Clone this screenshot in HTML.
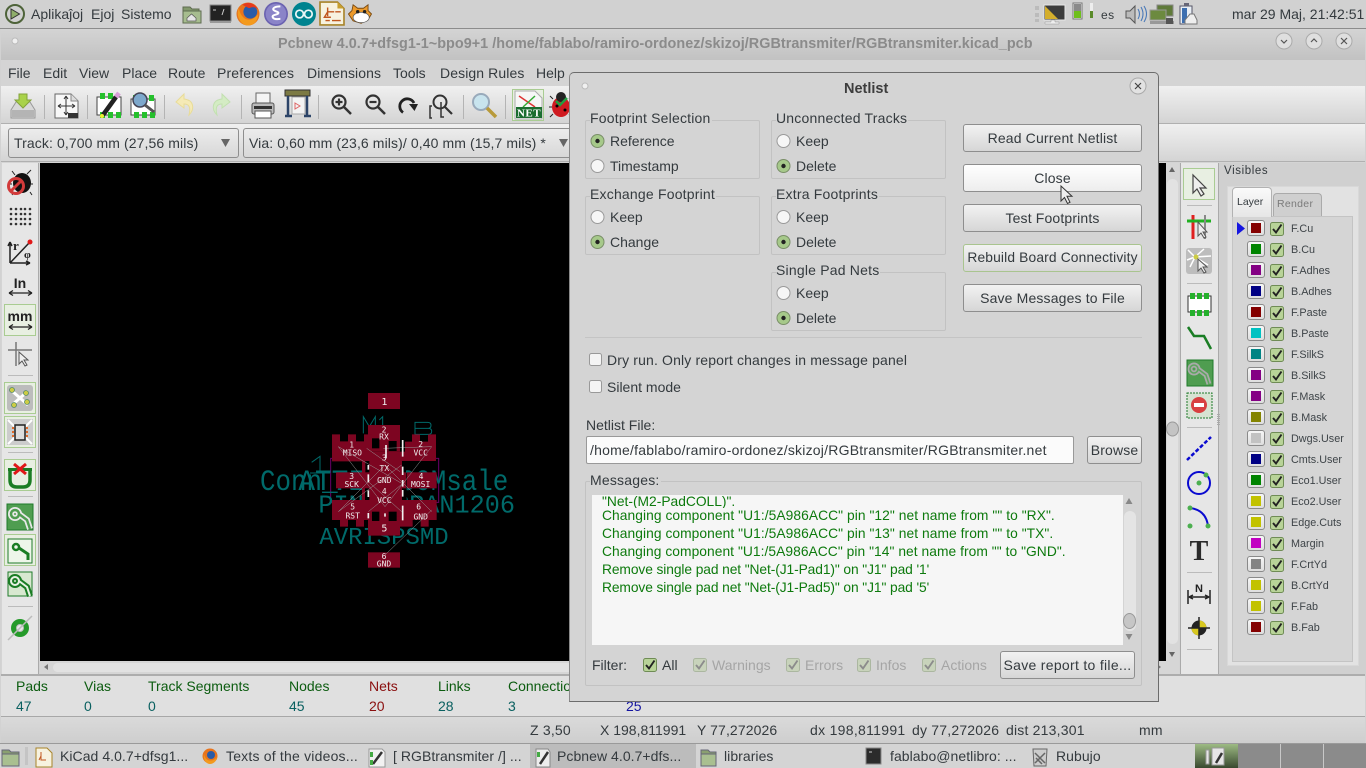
<!DOCTYPE html>
<html><head><meta charset="utf-8"><title>Pcbnew</title>
<style>
html,body{margin:0;padding:0;width:1366px;height:768px;overflow:hidden;background:#d2d2d2}
body{position:relative;font-family:"Liberation Sans",sans-serif;font-size:14px;color:#343a3e}
div,span.a{position:absolute}
.t{position:absolute;white-space:nowrap;line-height:18px;height:18px}
.btn{position:absolute;box-sizing:border-box;border:1px solid #8e8e8e;border-radius:3px;background:linear-gradient(#f2f2f2,#d6d6d6);text-align:center;line-height:26px;white-space:nowrap;letter-spacing:.15px}
.grp{position:absolute;box-sizing:border-box;border:1px solid #c2c2c2;border-radius:2px}
.lab{position:absolute;white-space:nowrap;line-height:18px;background:#d4d4d4;padding-right:1px;letter-spacing:.2px}
.box{position:absolute;box-sizing:border-box;border:1px solid #a9cc92;background:#e8efe2}
.sep{position:absolute;background:#bdbdbd}
.sw{position:absolute;left:1247px;width:18px;height:16px;margin-top:1px;box-sizing:border-box;border:1px solid #8a8a8a;border-radius:3px;background:linear-gradient(#f6f6f6,#dedede)}
.sw i{position:absolute;left:3px;top:2px;width:10px;height:10px;display:block}
.ll{position:absolute;left:1291px;font-size:10.8px;line-height:16px;margin-top:1px;white-space:nowrap;color:#3e4448}
.m{position:absolute;left:602px;font-size:13.8px;line-height:16px;color:#0d7a0d;white-space:nowrap}
.tb{font-size:14px;top:747px;letter-spacing:.05px}
.st{top:721px;letter-spacing:.2px}
.gr{color:#a5a5a5}
</style></head><body>

<!-- top panel -->
<div style="left:0;top:0;width:1366px;height:28px;background:#d1d1d1"></div>
<div class="t" style="left:31px;top:5px">Aplikaĵoj</div>
<div class="t" style="left:91px;top:5px">Ejoj</div>
<div class="t" style="left:121px;top:5px">Sistemo</div>
<div class="t" style="left:1101px;top:6px;font-size:12px;letter-spacing:.5px">es</div>
<div class="t" style="left:1232px;top:5px">mar 29 Maj, 21:42:51</div>

<!-- window frame -->
<div style="left:0;top:28px;width:1366px;height:1px;background:#8c8c8c"></div>
<div style="left:1px;top:29px;width:1364px;height:31px;background:linear-gradient(#d4d4d4,#c2c2c2)"></div>
<div class="t" style="left:278px;top:35px;font-weight:bold;font-size:14.4px;color:#8b8b8b;letter-spacing:.04px">Pcbnew 4.0.7+dfsg1-1~bpo9+1 /home/fablabo/ramiro-ordonez/skizoj/RGBtransmiter/RGBtransmiter.kicad_pcb</div>
<div style="left:1px;top:60px;width:1364px;height:26px;background:#d4d4d4"></div>
<div class="t" style="left:8px;top:64px">File</div>
<div class="t" style="left:43px;top:64px">Edit</div>
<div class="t" style="left:79px;top:64px">View</div>
<div class="t" style="left:122px;top:64px">Place</div>
<div class="t" style="left:168px;top:64px">Route</div>
<div class="t" style="left:217px;top:64px;letter-spacing:.15px">Preferences</div>
<div class="t" style="left:307px;top:64px;letter-spacing:.1px">Dimensions</div>
<div class="t" style="left:393px;top:64px">Tools</div>
<div class="t" style="left:440px;top:64px;letter-spacing:.1px">Design Rules</div>
<div class="t" style="left:536px;top:64px">Help</div>

<!-- toolbars -->
<div style="left:1px;top:86px;width:1364px;height:37px;background:linear-gradient(#f0f0f0,#d4d4d4);border-bottom:1px solid #b0b0b0"></div>
<div style="left:1px;top:124px;width:1364px;height:37px;background:linear-gradient(#f0f0f0,#d4d4d4);border-bottom:1px solid #b0b0b0"></div>
<div class="btn" style="left:8px;top:128px;width:231px;height:30px;text-align:left;padding-left:5px;line-height:28px;letter-spacing:.1px;background:linear-gradient(#ececec,#d8d8d8)">Track: 0,700 mm (27,56 mils)</div>
<div class="btn" style="left:243px;top:128px;width:340px;height:30px;text-align:left;padding-left:5px;line-height:28px;letter-spacing:.1px;background:linear-gradient(#ececec,#d8d8d8)">Via: 0,60 mm (23,6 mils)/ 0,40 mm (15,7 mils) *</div>

<!-- main area -->
<div style="left:1px;top:162px;width:1364px;height:513px;background:#d4d4d4"></div>
<div style="left:2px;top:163px;width:36px;height:511px;background:#e6e6e6;border-right:1px solid #aaa"></div>
<div style="left:40px;top:163px;width:1126px;height:498px;background:#000"></div>
<div style="left:1166px;top:163px;width:13px;height:498px;background:#d6d6d6"></div>
<div style="left:40px;top:661px;width:1139px;height:13px;background:#d6d6d6"></div>
<div style="left:53px;top:663px;width:1100px;height:9px;background:#e2e2e2;border-radius:5px"></div>
<div style="left:1180px;top:163px;width:37px;height:511px;background:#e6e6e6;border-left:1px solid #aaa;border-right:1px solid #aaa"></div>

<!-- visibles panel -->
<div style="left:1219px;top:163px;width:147px;height:511px;background:#d0d0d0"></div>
<div class="t" style="left:1224px;top:162px;font-size:11.5px;letter-spacing:.6px">Visibles</div>
<div style="left:1227px;top:186px;width:132px;height:480px;background:#e2e2e2;box-sizing:border-box;border:1px solid #d8d8d8"></div>
<div style="left:1273px;top:193px;width:49px;height:23px;box-sizing:border-box;background:#cfcfcf;border:1px solid #aaa;border-bottom:none;border-radius:4px 4px 0 0"></div>
<div class="t" style="left:1277px;top:195px;font-size:10.5px;color:#7a7a7a;letter-spacing:.3px">Render</div>
<div style="left:1232px;top:216px;width:121px;height:446px;background:#d5d5d5;box-sizing:border-box;border:1px solid #c4c4c4"></div>
<div style="left:1232px;top:187px;width:40px;height:30px;box-sizing:border-box;background:linear-gradient(#fafafa,#e6e6e6);border:1px solid #b2b2b2;border-bottom:none;border-radius:4px 4px 0 0"></div>
<div class="t" style="left:1237px;top:193px;font-size:10.5px">Layer</div>

<div class="sw" style="top:219px"><i style="background:#840000"></i></div><div class="ll" style="top:220px">F.Cu</div>
<div class="sw" style="top:240px"><i style="background:#008400"></i></div><div class="ll" style="top:241px">B.Cu</div>
<div class="sw" style="top:261px"><i style="background:#840084"></i></div><div class="ll" style="top:262px">F.Adhes</div>
<div class="sw" style="top:282px"><i style="background:#000084"></i></div><div class="ll" style="top:283px">B.Adhes</div>
<div class="sw" style="top:303px"><i style="background:#840000"></i></div><div class="ll" style="top:304px">F.Paste</div>
<div class="sw" style="top:324px"><i style="background:#00c2c2"></i></div><div class="ll" style="top:325px">B.Paste</div>
<div class="sw" style="top:345px"><i style="background:#008484"></i></div><div class="ll" style="top:346px">F.SilkS</div>
<div class="sw" style="top:366px"><i style="background:#840084"></i></div><div class="ll" style="top:367px">B.SilkS</div>
<div class="sw" style="top:387px"><i style="background:#840084"></i></div><div class="ll" style="top:388px">F.Mask</div>
<div class="sw" style="top:408px"><i style="background:#848400"></i></div><div class="ll" style="top:409px">B.Mask</div>
<div class="sw" style="top:429px"><i style="background:#c2c2c2"></i></div><div class="ll" style="top:430px">Dwgs.User</div>
<div class="sw" style="top:450px"><i style="background:#000084"></i></div><div class="ll" style="top:451px">Cmts.User</div>
<div class="sw" style="top:471px"><i style="background:#008400"></i></div><div class="ll" style="top:472px">Eco1.User</div>
<div class="sw" style="top:492px"><i style="background:#c2c200"></i></div><div class="ll" style="top:493px">Eco2.User</div>
<div class="sw" style="top:513px"><i style="background:#c2c200"></i></div><div class="ll" style="top:514px">Edge.Cuts</div>
<div class="sw" style="top:534px"><i style="background:#c200c2"></i></div><div class="ll" style="top:535px">Margin</div>
<div class="sw" style="top:555px"><i style="background:#848484"></i></div><div class="ll" style="top:556px">F.CrtYd</div>
<div class="sw" style="top:576px"><i style="background:#c2c200"></i></div><div class="ll" style="top:577px">B.CrtYd</div>
<div class="sw" style="top:597px"><i style="background:#c2c200"></i></div><div class="ll" style="top:598px">F.Fab</div>
<div class="sw" style="top:618px"><i style="background:#840000"></i></div><div class="ll" style="top:619px">B.Fab</div>

<!-- message panel -->
<div style="left:1px;top:674px;width:1364px;height:43px;box-sizing:border-box;background:#e0e0e0;border-top:2px solid #adadad;border-bottom:1px solid #a8a8a8"></div>
<div class="t" style="left:16px;top:677px;color:#0c5c10">Pads</div><div class="t" style="left:16px;top:697px;color:#0a6060">47</div>
<div class="t" style="left:84px;top:677px;color:#0c5c10">Vias</div><div class="t" style="left:84px;top:697px;color:#0a6060">0</div>
<div class="t" style="left:148px;top:677px;color:#0c5c10">Track Segments</div><div class="t" style="left:148px;top:697px;color:#0a6060">0</div>
<div class="t" style="left:289px;top:677px;color:#0c5c10">Nodes</div><div class="t" style="left:289px;top:697px;color:#0a6060">45</div>
<div class="t" style="left:369px;top:677px;color:#8a0f0f">Nets</div><div class="t" style="left:369px;top:697px;color:#8a0f0f">20</div>
<div class="t" style="left:438px;top:677px;color:#0c5c10">Links</div><div class="t" style="left:438px;top:697px;color:#0a6060">28</div>
<div class="t" style="left:508px;top:677px;color:#0c5c10">Connections</div><div class="t" style="left:508px;top:697px;color:#0a6060">3</div>
<div class="t" style="left:626px;top:697px;color:#1414a0">25</div>

<!-- status bar -->
<div style="left:1px;top:717px;width:1364px;height:26px;background:linear-gradient(#dadada,#cecece)"></div>
<div style="left:0;top:743px;width:1366px;height:1px;background:#9a9a9a"></div>
<div class="t st" style="left:530px">Z 3,50</div>
<div class="t st" style="left:600px;letter-spacing:0">X 198,811991</div>
<div class="t st" style="left:697px;letter-spacing:.1px">Y 77,272026</div>
<div class="t st" style="left:810px;letter-spacing:.3px">dx 198,811991</div>
<div class="t st" style="left:912px">dy 77,272026</div>
<div class="t st" style="left:1006px">dist 213,301</div>
<div class="t st" style="left:1139px">mm</div>

<!-- taskbar -->
<div style="left:0;top:744px;width:1366px;height:24px;background:#d4d4d4"></div>
<div style="left:530px;top:744px;width:166px;height:24px;background:#bcbcbc"></div>
<div style="left:1195px;top:744px;width:43px;height:24px;background:linear-gradient(#9dbb83,#39492f)"></div>
<div style="left:1238px;top:744px;width:128px;height:24px;background:#8b8b8b"></div>
<div style="left:1280px;top:744px;width:1px;height:24px;background:#c8c8c8"></div>
<div style="left:1323px;top:744px;width:1px;height:24px;background:#c8c8c8"></div>
<div class="t tb" style="left:60px">KiCad 4.0.7+dfsg1...</div>
<div class="t tb" style="left:226px;letter-spacing:.2px">Texts of the videos...</div>
<div class="t tb" style="left:393px">[ RGBtransmiter /] ...</div>
<div class="t tb" style="left:557px">Pcbnew 4.0.7+dfs...</div>
<div class="t tb" style="left:724px">libraries</div>
<div class="t tb" style="left:890px">fablabo@netlibro: ...</div>
<div class="t tb" style="left:1056px">Rubujo</div>

<!-- toolbar highlighted boxes -->
<div class="box" style="left:4px;top:304px;width:32px;height:32px"></div>
<div class="box" style="left:4px;top:382px;width:32px;height:32px"></div>
<div class="box" style="left:4px;top:416px;width:32px;height:32px"></div>
<div class="box" style="left:4px;top:459px;width:32px;height:32px"></div>
<div class="box" style="left:4px;top:534px;width:32px;height:32px"></div>
<div class="box" style="left:1183px;top:168px;width:32px;height:32px"></div>
<div class="box" style="left:512px;top:89px;width:32px;height:32px"></div>

<!-- all base-layer graphics -->
<svg style="position:absolute;left:0;top:0" width="1366" height="768" viewBox="0 0 1366 768">
<defs>
<g id="ck"><rect x="0.5" y="0.5" width="13" height="13" rx="2" fill="#b8d398" stroke="#6f8c55"/><path d="M3 7l3 3.5 5.5-8" fill="none" stroke="#222" stroke-width="1.9"/></g>
<g id="pad" fill="none"><circle cx="-6" cy="-4" r="4"/><path d="M-2-4L6 2 9 11"/></g>
</defs>
<!-- top panel icons -->
<circle cx="15" cy="14" r="9" fill="none" stroke="#4e6339" stroke-width="2"/>
<path d="M11 9v10l8.500-5z" fill="#8fae6b" stroke="#333" stroke-width="1"/>
<g transform="translate(16 0)"><path d="M167 7h7l2 2h7v14h-16z" fill="#83986c" stroke="#5e6b50"/><rect x="167" y="11" width="18" height="12" fill="#a7bd8f" stroke="#5e6b50"/><path d="M171 18l4.500-4 4.500 4v3h-9z" fill="#e6e6e6" stroke="#555" stroke-width=".7"/></g>
<g transform="translate(18 0)"><rect x="192" y="5" width="21" height="16" fill="#222" stroke="#888"/><rect x="192" y="21" width="21" height="2" fill="#999"/><path d="M195 10h3M206 9l-2 6" stroke="#ccc" stroke-width="1" fill="none"/></g>
<g transform="translate(248 14) scale(1.15) translate(-227 -14)"><circle cx="227" cy="14" r="10" fill="#e8741c"/><circle cx="229" cy="12" r="6" fill="#2a5ba8"/><path d="M219 9c2 10 10 14 17 5-1 8-5 10-9 10-6 0-11-8-8-15z" fill="#f39a1d"/><path d="M222 6c5-3 10-2 14 4-4-3-6-2-8-1z" fill="#e53a1e"/></g>
<g transform="translate(276 14) scale(1.09) translate(-253 -14)"><circle cx="253" cy="14" r="11" fill="#6a62b0"/><circle cx="253" cy="14" r="9.500" fill="#8a84c8"/><path d="M257 7c-5 0-8 2-6 3.500s5 1.500 4 3-6 1-5 3.500 5 1.500 7 1.500" fill="none" stroke="#fff" stroke-width="1.800"/></g>
<g transform="translate(304 14) scale(1.09) translate(-279 -14)"><circle cx="279" cy="14" r="11" fill="#00838f"/><circle cx="275" cy="14" r="3.500" fill="none" stroke="#eaf6f6" stroke-width="1.600"/><circle cx="283" cy="14" r="3.500" fill="none" stroke="#eaf6f6" stroke-width="1.600"/></g>
<g transform="translate(332 14) scale(1.09) translate(-304 -14)"><path d="M293 3h16l6 6v15h-22z" fill="#f7f2df" stroke="#a8842a" stroke-width="1.500"/><path d="M309 3l6 6h-6z" fill="#c8a030"/><path d="M300 8v8M300 12h6M300 12l-3 5h6M307 12h5M298 20h4M304 20h8" stroke="#c0561f" stroke-width="1.300" fill="none"/></g>
<g transform="translate(360 14) scale(1.15) translate(-330 -14)"><path d="M320 14l3-3 1-5 4 3h5l4-3 0 5 3 3-3 5-6 3-7-2z" fill="#ec9a2c" stroke="#7a4b12" stroke-width=".8"/><ellipse cx="331" cy="17" rx="7" ry="4.500" fill="#fff" stroke="#555" stroke-width=".6"/><circle cx="328" cy="12" r="1.500" fill="#222"/><circle cx="334" cy="12" r="1.500" fill="#222"/></g>
<rect x="1035" y="6" width="4" height="4" fill="#bbb"/><rect x="1035" y="13" width="4" height="4" fill="#bbb"/><rect x="1035" y="19" width="4" height="3" fill="#bbb"/>
<rect x="1044" y="5" width="21" height="15" fill="#3c3c3c" stroke="#e8e8e8"/><path d="M1045 6v13h13z" fill="#d4ae2c"/><path d="M1051 20h4v2h4v2h-14v-2h6z" fill="#eee" stroke="#999" stroke-width=".5"/>
<rect x="1073" y="3" width="9" height="16" fill="#eee" stroke="#777"/><rect x="1074" y="4" width="7" height="7" fill="#8a8a8a"/><rect x="1074" y="11" width="7" height="7" fill="#6fbf1c"/>
<rect x="1090" y="3" width="3" height="15" fill="#eee"/><rect x="1090" y="11" width="3" height="7" fill="#5a8a2a"/>
<path d="M1126 11h4l5-5v17l-5-5h-4z" fill="#bbb" stroke="#555"/><path d="M1138 9q3 5 0 10M1141 7q4 7 0 14M1144 6q5 8 0 16" fill="none" stroke="#4a79b8" stroke-width="1.100"/>
<rect x="1157" y="5" width="16" height="11" fill="#5f7a3a" stroke="#888"/><rect x="1150" y="10" width="16" height="10" fill="#6c8a3f" stroke="#999"/><rect x="1150" y="21" width="24" height="3" fill="#999"/><rect x="1166" y="18" width="7" height="6" fill="#555"/>
<rect x="1180" y="6" width="12" height="18" fill="#e8eef5" stroke="#556"/><rect x="1182" y="8" width="5" height="15" fill="#3d6fb0"/><rect x="1184" y="3" width="5" height="3" fill="#667"/><path d="M1190 14h4l3 6v4h-12v-4z" fill="#eee" stroke="#777"/>
<!-- window buttons -->
<circle cx="15" cy="41" r="3" fill="#f0f0f0" stroke="#bbb"/>
<g fill="#dfdfdf" stroke="#aaa"><circle cx="1284" cy="41" r="8"/><circle cx="1314" cy="41" r="8"/><circle cx="1344" cy="41" r="8"/></g>
<path d="M1281 40l3 3 3-3M1311 42l3-3 3 3M1341 38l6 6M1347 38l-6 6" fill="none" stroke="#555" stroke-width="1.200"/>
<!-- toolbar separators -->
<g stroke="#b4b4b4"><path d="M44.500 95v24M87.500 95v24M164.500 95v24M241.500 95v24M318.500 95v24M463.500 95v24M505.500 95v24"/></g>
<!-- download -->
<path d="M11 110l5-8h14l5 8v8H11z" fill="#d8d8d8" stroke="#999"/><rect x="12" y="110" width="22" height="7" fill="#b4b4b4"/><path d="M19 94h8v6h4l-8 8-8-8h4z" fill="#a9d24a" stroke="#83a33a"/>
<!-- grid doc -->
<path d="M55 94h16l7 7v17H55z" fill="#f8f8f8" stroke="#666"/><path d="M71 94v7h7" fill="#ddd" stroke="#888"/><path d="M58 106h17M66 96v19M66 96l-2 3M66 96l2 3M66 115l-2-3M66 115l2-3M58 106l3-2M58 106l3 2M75 106l-3-2M75 106l-3 2" fill="none" stroke="#333"/><rect x="68" y="113" width="10" height="5" fill="#333"/>
<!-- pcb pencil -->
<rect x="97" y="97" width="24" height="18" fill="#fff" stroke="#444"/><g fill="#25c02c"><rect x="100" y="93" width="5" height="6"/><rect x="108" y="93" width="5" height="6"/><rect x="100" y="112" width="5" height="6"/><rect x="108" y="112" width="5" height="6"/><rect x="116" y="112" width="5" height="6"/></g><path d="M103 115l13-18" stroke="#222" stroke-width="4.500"/><path d="M116 97l3-4" stroke="#d99ed8" stroke-width="4.500"/><circle cx="102" cy="116" r="2" fill="#ee3"/>
<!-- pcb search -->
<rect x="131" y="99" width="24" height="16" fill="#fff" stroke="#444"/><g fill="#25c02c"><rect x="133" y="95" width="5" height="6"/><rect x="149" y="95" width="5" height="6"/><rect x="134" y="112" width="5" height="6"/><rect x="142" y="112" width="5" height="6"/><rect x="150" y="112" width="5" height="6"/></g><circle cx="140" cy="100" r="7" fill="#7da8cc" stroke="#445" stroke-width="1.500"/><path d="M145 105l9 7" stroke="#555" stroke-width="3"/>
<!-- undo redo -->
<path d="M184 94l-8 8 8 6v-4c5 0 7 3 5 11 6-6 5-15-5-16z" fill="#f5eab6" stroke="#e8dc98"/>
<path d="M222 94l8 8-8 6v-4c-5 0-7 3-5 11-6-6-5-15 5-16z" fill="#d4ecc4" stroke="#c2e0b0"/>
<!-- printer -->
<rect x="256" y="93" width="14" height="10" fill="#f4f4f4" stroke="#666"/><rect x="252" y="103" width="22" height="11" rx="2" fill="#bbb" stroke="#555"/><rect x="255" y="111" width="16" height="7" fill="#fff" stroke="#555"/><rect x="254" y="106" width="18" height="3" fill="#333"/>
<!-- plotter -->
<rect x="285" y="90" width="25" height="6" fill="#7c7a44" stroke="#333"/><path d="M288 96v20M307 96v20M285 116h7M304 116h7" stroke="#2c4468" stroke-width="2.500" fill="none"/><path d="M292 97h13v17h-13z" fill="#f3f3f3" stroke="#aaa"/><path d="M295 103l5 3-5 3z" fill="none" stroke="#d66"/>
<!-- zoom icons -->
<g fill="none" stroke="#333"><circle cx="339" cy="102" r="6.500" stroke-width="2.200"/><path d="M344 107l7 7" stroke-width="2.500"/><path d="M335.500 102h7M339 98.500v7" stroke-width="2.200"/>
<circle cx="373" cy="102" r="6.500" stroke-width="2.200"/><path d="M378 107l7 7" stroke-width="2.500"/><path d="M369.500 102h7" stroke-width="2.200"/>
<path d="M403 112.500A7.500 7.500 0 1 1 414 103" stroke-width="2.800" stroke="#222"/><circle cx="440" cy="102" r="6.500" stroke-width="2"/><path d="M445 107l7 7" stroke-width="2.200"/><path d="M441 102v15M432 106h-2v12h2M441 116v1h3" stroke-width="1.500"/></g>
<path d="M409 104h9l-3.500 7z" fill="#222"/>
<!-- search -->
<circle cx="481" cy="102" r="8" fill="#c8e4ee" stroke="#9ab" stroke-width="2"/><path d="M487 108l9 9" stroke="#b89a3a" stroke-width="3.500"/>
<!-- NET -->
<path d="M515 91h20l7 7v21h-27z" fill="#f6f6f6" stroke="#aaa"/><path d="M519 96l16 11" stroke="#d33" stroke-width="1.500"/><path d="M535 96l-12 11" stroke="#3a3" stroke-width="1.500"/><rect x="516" y="107" width="26" height="11" fill="#1a6d2f"/>
<text x="529" y="116.500" font-family="Liberation Serif" font-size="11" font-weight="bold" fill="#fff" text-anchor="middle" letter-spacing=".5">NET</text>
<!-- ladybug -->
<ellipse cx="561" cy="107" rx="9" ry="10" fill="#cf1a20"/><circle cx="561" cy="97" r="5" fill="#222"/><circle cx="557" cy="106" r="1.500"/><circle cx="565" cy="110" r="1.500"/><path d="M553 99l-3-3M569 99l3-3M552 107h-3M570 107h3M553 114l-3 3M569 114l3 3" stroke="#222"/><path d="M556 101l4 4 7-7" stroke="#20a040" stroke-width="2.500" fill="none"/>
<!-- combo arrows -->
<path d="M221 139h9l-4.500 8zM559 139h9l-4.500 8z" fill="#666"/>
<!-- left toolbar -->
<ellipse cx="22" cy="183" rx="9" ry="10" fill="#111"/><path d="M15 175l-3-4M27 174l4-4M12 184h-2M31 184h2M14 192l-2 3M30 192l2 3" stroke="#222"/><circle cx="16" cy="186" r="7.500" fill="none" stroke="#d23a3a" stroke-width="3"/><path d="M11 191l11-11" stroke="#d23a3a" stroke-width="3"/>
<g fill="#333"><circle cx="11" cy="209" r="1.300"/><circle cx="16" cy="209" r="1.300"/><circle cx="21" cy="209" r="1.300"/><circle cx="25" cy="209" r="1.300"/><circle cx="30" cy="209" r="1.300"/><circle cx="11" cy="214" r="1.300"/><circle cx="16" cy="214" r="1.300"/><circle cx="21" cy="214" r="1.300"/><circle cx="25" cy="214" r="1.300"/><circle cx="30" cy="214" r="1.300"/><circle cx="11" cy="219" r="1.300"/><circle cx="16" cy="219" r="1.300"/><circle cx="21" cy="219" r="1.300"/><circle cx="25" cy="219" r="1.300"/><circle cx="30" cy="219" r="1.300"/><circle cx="11" cy="224" r="1.300"/><circle cx="16" cy="224" r="1.300"/><circle cx="21" cy="224" r="1.300"/><circle cx="25" cy="224" r="1.300"/><circle cx="30" cy="224" r="1.300"/></g>
<path d="M10 263V242M10 263h20M10 263l19-20M10 242l-2 4M10 242l2 4M30 263l-4-2M30 263l-4 2" fill="none" stroke="#222" stroke-width="1.500"/><circle cx="30" cy="242" r="2.500" fill="#e01818"/>
<text x="13" y="250" font-family="Liberation Serif" font-size="13" font-weight="bold" fill="#222">r</text><text x="24" y="258" font-family="Liberation Serif" font-size="11" font-weight="bold" fill="#222">φ</text>
<text x="20" y="288" font-family="Liberation Sans" font-size="14" font-weight="bold" fill="#222" text-anchor="middle">In</text>
<path d="M9 293h23M9 293l4-2.500M9 293l4 2.500M32 293l-4-2.500M32 293l-4 2.500" fill="none" stroke="#222" stroke-width="1.300"/>
<text x="20" y="321" font-family="Liberation Sans" font-size="14" font-weight="bold" fill="#222" text-anchor="middle">mm</text>
<path d="M9 327h23M9 327l4-2.500M9 327l4 2.500M32 327l-4-2.500M32 327l-4 2.500" fill="none" stroke="#222" stroke-width="1.300"/>
<path d="M16 342v24M8 350h24" stroke="#777" stroke-width="1.500"/><path d="M19 352v12l3-3 3 5 2-1-3-5h4z" fill="#eee" stroke="#555"/>
<rect x="8" y="375" width="25" height="1" fill="#bbb"/>
<rect x="7" y="385" width="26" height="26" rx="3" fill="#bcbcbc"/><path d="M12 391l16 14M28 391l-16 14" stroke="#fff" stroke-width="3"/><g fill="#cc4" stroke="#586" stroke-width=".8"><circle cx="12" cy="390" r="2.500"/><circle cx="26" cy="393" r="2.500"/><circle cx="14" cy="405" r="2.500"/><circle cx="27" cy="402" r="2.500"/></g>
<rect x="7" y="419" width="26" height="26" fill="#ccc"/><path d="M8 420l8 8M32 420l-8 8M8 444l8-8M32 444l-8-8" stroke="#fff" stroke-width="2"/><rect x="15" y="425" width="10" height="15" fill="#ddd" stroke="#222" stroke-width="1.500"/><g fill="#e06a2a"><rect x="12" y="427" width="2" height="2"/><rect x="12" y="431" width="2" height="2"/><rect x="12" y="435" width="2" height="2"/><rect x="26" y="427" width="2" height="2"/><rect x="26" y="431" width="2" height="2"/><rect x="26" y="435" width="2" height="2"/></g>
<rect x="8" y="452" width="25" height="1" fill="#bbb"/>
<path d="M10 470v10q0 7 7 7h6q7 0 7-7v-10" fill="none" stroke="#1a7d24" stroke-width="3.500"/><rect x="8" y="468" width="24" height="3" fill="#1a7d24"/><path d="M14 464l12 10M26 464l-12 10" stroke="#e01818" stroke-width="3"/>
<rect x="8" y="496" width="25" height="1" fill="#bbb"/>
<rect x="7" y="504" width="26" height="26" fill="#4f9d50" stroke="#1f7a2a"/>
<use href="#pad" x="21" y="518" stroke="#e8e8e8" stroke-width="6"/><use href="#pad" x="21" y="518" stroke="#4f9d50" stroke-width="2.500"/>
<rect x="8" y="539" width="24" height="24" fill="#eef6ea" stroke="#1f7a2a"/>
<circle cx="16" cy="547" r="3" fill="none" stroke="#1a7d24" stroke-width="2.500"/><path d="M19 548l9 6v6" fill="none" stroke="#1a7d24" stroke-width="3"/>
<rect x="8" y="572" width="24" height="24" fill="#d8e8d0" stroke="#1f7a2a"/>
<use href="#pad" x="21" y="585" stroke="#1a7d24" stroke-width="6"/><use href="#pad" x="21" y="585" stroke="#e8f2e4" stroke-width="2"/>
<rect x="8" y="606" width="25" height="1" fill="#bbb"/>
<circle cx="20" cy="628" r="9" fill="#259a2a"/><circle cx="20" cy="628" r="3.500" fill="#e8e8e8" stroke="#bbb"/><path d="M8 640l24-24" stroke="#bcbcbc" stroke-width="1.500"/>
<!-- scrollbar arrows -->
<path d="M1172 167l3 5h-6zM1172 657l3-5h-6z" fill="#666"/><path d="M44 667l4-3v6zM1161 667l-4-3v6z" fill="#777"/>
<rect x="1167" y="179" width="11" height="465" rx="5" fill="#e2e2e2"/>
<ellipse cx="1172.500" cy="429" rx="6" ry="7" fill="#c4c4c4" stroke="#999"/>
<path d="M1218.500 414v12" stroke="#aaa" stroke-dasharray="1 1" stroke-width="3"/>
<!-- right toolbar -->
<path d="M1193 175v18l4-4 4 7 3-2-4-6h6z" fill="#eee" stroke="#444" stroke-width="1.200"/>
<rect x="1187" y="205" width="25" height="1" fill="#bbb"/>
<path d="M1193 215v24" stroke="#e02020" stroke-width="3"/><path d="M1187 221h24" stroke="#20b020" stroke-width="3"/><path d="M1205 215v24" stroke="#888" stroke-width="2"/><path d="M1198 222v14l3-3 3 5 2-1-3-5h4z" fill="#eee" stroke="#555"/>
<rect x="1186" y="248" width="26" height="26" rx="3" fill="#bdbdbd"/><path d="M1195 257l-7-7M1195 257l-8 3M1195 257l-5 10M1195 257l9-8M1195 257l16-1M1195 257l13 8" stroke="#fff" stroke-width="1.500"/><circle cx="1196" cy="257" r="2.500" fill="#cc4"/><path d="M1198 259v12l3-3 3 5 2-1-3-5h4z" fill="#eee" stroke="#555"/>
<rect x="1187" y="283" width="25" height="1" fill="#bbb"/>
<rect x="1188" y="296" width="23" height="16" fill="#fff" stroke="#333"/><g fill="#25b02c"><rect x="1190" y="293" width="5" height="6"/><rect x="1197" y="293" width="5" height="6"/><rect x="1204" y="293" width="5" height="6"/><rect x="1190" y="310" width="5" height="6"/><rect x="1197" y="310" width="5" height="6"/><rect x="1204" y="310" width="5" height="6"/></g>
<path d="M1188 327l6 9h10l7 13" fill="none" stroke="#1a7d24" stroke-width="2.500"/>
<rect x="1187" y="360" width="26" height="26" fill="#4f9d50" stroke="#1f7a2a"/>
<use href="#pad" x="1200" y="373" stroke="#aaa" stroke-width="5"/><use href="#pad" x="1200" y="373" stroke="#5da55e" stroke-width="1.500"/>
<rect x="1187" y="393" width="25" height="25" fill="#d7e3d2" stroke="#1f7a2a" stroke-dasharray="2 1"/><circle cx="1199" cy="405" r="8" fill="#d84040"/><rect x="1194" y="403" width="10" height="4" fill="#fff"/>
<rect x="1187" y="427" width="25" height="1" fill="#bbb"/>
<path d="M1187 460l24-23" stroke="#0a0ad0" stroke-width="2.500" stroke-dasharray="4 2"/>
<circle cx="1199" cy="483" r="11" fill="none" stroke="#0a0ad0" stroke-width="2"/><circle cx="1199" cy="483" r="2.500" fill="#4caf50"/><circle cx="1206" cy="475" r="2.500" fill="#4caf50"/>
<path d="M1190 508q16 2 18 18" fill="none" stroke="#0a0ad0" stroke-width="2"/><g fill="#4caf50"><circle cx="1190" cy="508" r="2.500"/><circle cx="1190" cy="526" r="2.500"/><circle cx="1208" cy="526" r="2.500"/></g>
<text x="1199" y="560" font-family="Liberation Serif" font-size="28" font-weight="bold" fill="#2a2a2a" text-anchor="middle">T</text>
<rect x="1187" y="572" width="25" height="1" fill="#bbb"/>
<text x="1199" y="592" font-family="Liberation Sans" font-size="11" font-weight="bold" fill="#222" text-anchor="middle">N</text>
<path d="M1188 590v14M1210 590v14M1189 597h20M1189 597l4-2M1189 597l4 2M1209 597l-4-2M1209 597l-4 2" fill="none" stroke="#222" stroke-width="1.500"/>
<circle cx="1199" cy="628" r="7.500" fill="#222"/><path d="M1199 620.500a7.500 7.500 0 0 1 7.500 7.500h-7.500zM1199 635.500a7.500 7.500 0 0 1-7.500-7.500h7.500z" fill="#d8c820"/><path d="M1188 628h22M1199 617v22" stroke="#222" stroke-width="1.500"/>
<rect x="1187" y="649" width="25" height="1" fill="#bbb"/>
<!-- visibles checks -->
<path d="M1237 222v13l8-6.500z" fill="#1515e0"/>
<g><use href="#ck" x="1270" y="222"/><use href="#ck" x="1270" y="243"/><use href="#ck" x="1270" y="264"/><use href="#ck" x="1270" y="285"/><use href="#ck" x="1270" y="306"/><use href="#ck" x="1270" y="327"/><use href="#ck" x="1270" y="348"/><use href="#ck" x="1270" y="369"/><use href="#ck" x="1270" y="390"/><use href="#ck" x="1270" y="411"/><use href="#ck" x="1270" y="432"/><use href="#ck" x="1270" y="453"/><use href="#ck" x="1270" y="474"/><use href="#ck" x="1270" y="495"/><use href="#ck" x="1270" y="516"/><use href="#ck" x="1270" y="537"/><use href="#ck" x="1270" y="558"/><use href="#ck" x="1270" y="579"/><use href="#ck" x="1270" y="600"/><use href="#ck" x="1270" y="621"/></g>
<!-- taskbar icons -->
<path d="M2 750h7l2 2h8v14H2z" fill="#8aa070" stroke="#667"/><rect x="2" y="754" width="17" height="12" fill="#a9bf90" stroke="#667"/>
<rect x="25" y="747" width="3" height="18" fill="#c4c4c4"/>
<path d="M36 748h11l5 5v14H36z" fill="#f7f2df" stroke="#a8842a"/><path d="M41 752v8h5M41 756l-2 4" stroke="#c0561f" fill="none"/>
<circle cx="210" cy="756" r="7.500" fill="#e8741c"/><circle cx="211" cy="755" r="4" fill="#2a5ba8"/><path d="M204 754c1 7 8 9 13 3-1 5-4 7-7 7-4 0-7-5-6-10z" fill="#f39a1d"/>
<path d="M369 749h13l3 3v15h-16z" fill="#f2f2f2" stroke="#999"/><path d="M373 764l9-12" stroke="#333" stroke-width="2.500"/><rect x="370" y="752" width="3" height="5" fill="#4a4"/><rect x="370" y="760" width="3" height="5" fill="#4a4"/>
<path d="M536 749h12l2 3v15h-14z" fill="#ededed" stroke="#888"/><path d="M540 764l8-12" stroke="#333" stroke-width="2.500"/><rect x="537" y="752" width="3" height="5" fill="#4a4"/>
<path d="M701 750h7l2 2h6v14h-15z" fill="#8aa070" stroke="#667"/><rect x="701" y="754" width="15" height="12" fill="#a9bf90" stroke="#667"/>
<rect x="866" y="748" width="15" height="16" fill="#2b2b2b" stroke="#888"/><path d="M869 752h3" stroke="#ccc"/>
<path d="M1033 749h14l-1 17h-12z" fill="#ccc" stroke="#666"/><path d="M1035 753l10 10M1045 753l-10 10M1036 758l6 6" stroke="#666" stroke-width="1.500"/>
<path d="M1206 750h3v14h-3zM1212 748h12v17h-12z" fill="#e6e6e6" stroke="#999"/><path d="M1216 763l6-10" stroke="#333" stroke-width="2.500"/>
</svg>

<!-- PCB -->
<svg style="position:absolute;left:250px;top:385px" width="270" height="190" viewBox="0 0 810 570">
<g fill="none" stroke="#006a6a" stroke-width="3">
<path d="M242 220v132h324V220z" stroke="#6a006a"/>
<path d="M495 112h38q10 0 10 9t-10 9h-38zM495 130h40q10 0 10 9t-10 9h-40z"/>
<path d="M340 145V95l18 30 18-30v50M388 105l10-10v50"/>
<path d="M185 232l25-18v50M180 264h60"/>
</g>
<g font-family="Liberation Mono" fill="#006a6a">
<text x="30" y="315" font-size="88" textLength="745" lengthAdjust="spacingAndGlyphs">Conn_AVR_COMsale</text>
<text x="145" y="315" font-size="88" textLength="250" lengthAdjust="spacingAndGlyphs">ATTIN</text>
<text x="205" y="382" font-size="78" textLength="590" lengthAdjust="spacingAndGlyphs">PIN_ARRAN1206</text>
<text x="208" y="477" font-size="72" textLength="388" lengthAdjust="spacingAndGlyphs">AVRISPSMD</text>
</g>
<g fill="#7d0521">
<rect x="354" y="24" width="96" height="48"/>
<path d="M354 120h96v80h-96z"/>
<path d="M246 148h24v21h24v-21h24v21h24v-21h24v81H246z"/>
<path d="M465 170h21v-22h24v22h24v-22h24v80h-93z"/>
<rect x="258" y="262" width="87" height="48"/><rect x="470" y="262" width="90" height="48"/>
<path d="M246 345h120v60h-24v20h-24v-20h-24v20h-24v-20h-24z"/>
<path d="M450 345h110v60h-24v20h-24v-20h-24v20h-38z"/>
<rect x="336" y="200" width="132" height="200"/>
<path d="M354 395h96v57h-96z"/>
<rect x="354" y="502" width="96" height="46"/>
</g>
<g fill="#000"><rect x="346" y="228" width="12" height="34"/><rect x="345" y="310" width="13" height="35"/><rect x="456" y="228" width="12" height="34"/><rect x="456" y="310" width="14" height="35"/><rect x="366" y="380" width="22" height="28"/><rect x="416" y="380" width="24" height="28"/><rect x="366" y="160" width="22" height="30"/><rect x="416" y="168" width="24" height="30"/></g>
<g stroke="#9a9a9a" stroke-width="1.500" fill="none"><path d="M265 185l140 180 140-180M265 380l140-140 140 140M400 190L545 185M350 190l100 70M265 185l190 110M265 380L455 240M405 510l140-135M355 380l110-90M355 290l100 90"/></g>
<g fill="#f0f0f0" font-family="DejaVu Sans Mono,Liberation Mono" font-size="24" text-anchor="middle">
<text x="403" y="60" font-size="30">1</text><text x="402" y="142">2</text><text x="402" y="164">RX</text>
<text x="305" y="188">1</text><text x="307" y="212">MISO</text><text x="512" y="186">2</text><text x="512" y="212">VCC</text>
<text x="305" y="282">3</text><text x="305" y="306">SCK</text><text x="513" y="282">4</text><text x="512" y="306">MOSI</text>
<text x="308" y="374">5</text><text x="308" y="401">RST</text><text x="506" y="374">6</text><text x="512" y="403">GND</text>
<text x="403" y="227">3</text><text x="403" y="258">TX</text><text x="403" y="294">GND</text><text x="403" y="327">4</text><text x="403" y="354">VCC</text><text x="403" y="440" font-size="30">5</text>
<text x="402" y="522">6</text><text x="402" y="545">GND</text>
</g>
<g stroke="#f0f0f0" stroke-width="5"><path d="M355 240v14M355 268v24M355 316v20M458 165v50M458 245v25M458 285v20M458 315v20M458 362v44M408 180v40M355 384v16M405 385v10"/></g>
</svg>

<!-- dialog -->
<div style="left:569px;top:72px;width:590px;height:630px;box-sizing:border-box;background:#d4d4d4;border:1px solid #6c6c6c;border-radius:5px 5px 0 0;border-left-color:#8a8a8a"></div>
<div class="t" style="left:844px;top:80px;font-weight:bold;font-size:14.500px;color:#3d3d3d">Netlist</div>

<div class="grp" style="left:585px;top:120px;width:175px;height:59px"></div><div class="lab" style="left:590px;top:109px">Footprint Selection</div>
<div class="grp" style="left:585px;top:196px;width:175px;height:59px"></div><div class="lab" style="left:590px;top:185px">Exchange Footprint</div>
<div class="grp" style="left:771px;top:120px;width:175px;height:59px"></div><div class="lab" style="left:776px;top:109px">Unconnected Tracks</div>
<div class="grp" style="left:771px;top:196px;width:175px;height:59px"></div><div class="lab" style="left:776px;top:185px">Extra Footprints</div>
<div class="grp" style="left:771px;top:272px;width:175px;height:59px"></div><div class="lab" style="left:776px;top:261px">Single Pad Nets</div>

<div class="t" style="left:610px;top:132px">Reference</div>
<div class="t" style="left:610px;top:157px">Timestamp</div>
<div class="t" style="left:610px;top:208px">Keep</div>
<div class="t" style="left:610px;top:233px">Change</div>
<div class="t" style="left:796px;top:132px">Keep</div>
<div class="t" style="left:796px;top:157px">Delete</div>
<div class="t" style="left:796px;top:208px">Keep</div>
<div class="t" style="left:796px;top:233px">Delete</div>
<div class="t" style="left:796px;top:284px">Keep</div>
<div class="t" style="left:796px;top:309px">Delete</div>

<div class="btn" style="left:963px;top:124px;width:179px;height:28px">Read Current Netlist</div>
<div class="btn" style="left:963px;top:164px;width:179px;height:28px;background:linear-gradient(#fff,#ededed)">Close</div>
<div class="btn" style="left:963px;top:204px;width:179px;height:28px">Test Footprints</div>
<div class="btn" style="left:963px;top:244px;width:179px;height:28px;border-color:#a9c48f;font-size:13.800px">Rebuild Board Connectivity</div>
<div class="btn" style="left:963px;top:284px;width:179px;height:28px">Save Messages to File</div>

<div style="left:585px;top:337px;width:557px;height:1px;background:#c4c4c4"></div>
<div class="t" style="left:607px;top:351px;letter-spacing:.15px">Dry run. Only report changes in message panel</div>
<div class="t" style="left:607px;top:378px">Silent mode</div>

<div class="t" style="left:586px;top:416px">Netlist File:</div>
<div style="left:586px;top:436px;width:488px;height:28px;box-sizing:border-box;background:#fbfbfb;border:1px solid #999;border-radius:2px"></div>
<div class="t" style="left:590px;top:441px;letter-spacing:.22px">/home/fablabo/ramiro-ordonez/skizoj/RGBtransmiter/RGBtransmiter.net</div>
<div class="btn" style="left:1087px;top:436px;width:55px;height:28px">Browse</div>

<div class="grp" style="left:585px;top:481px;width:557px;height:205px"></div>
<div class="lab" style="left:590px;top:471px">Messages:</div>
<div style="left:592px;top:495px;width:531px;height:150px;background:#f6f6f6"></div>
<div class="m" style="top:494px;height:14px;overflow:hidden">"Net-(M2-PadCOLL)".</div>
<div class="m" style="top:508px;letter-spacing:.06px">Changing component "U1:/5A986ACC" pin "12" net name from "" to "RX".</div>
<div class="m" style="top:526px;letter-spacing:.06px">Changing component "U1:/5A986ACC" pin "13" net name from "" to "TX".</div>
<div class="m" style="top:544px;letter-spacing:.05px">Changing component "U1:/5A986ACC" pin "14" net name from "" to "GND".</div>
<div class="m" style="top:562px;letter-spacing:-.1px">Remove single pad net "Net-(J1-Pad1)" on "J1" pad '1'</div>
<div class="m" style="top:580px;letter-spacing:-.1px">Remove single pad net "Net-(J1-Pad5)" on "J1" pad '5'</div>
<div style="left:1124px;top:511px;width:12px;height:120px;background:#e4e4e4;border-radius:6px"></div>

<div class="t" style="left:592px;top:656px">Filter:</div>
<div class="t" style="left:662px;top:656px">All</div>
<div class="t gr" style="left:712px;top:656px">Warnings</div>
<div class="t gr" style="left:805px;top:656px">Errors</div>
<div class="t gr" style="left:876px;top:656px">Infos</div>
<div class="t gr" style="left:941px;top:656px">Actions</div>
<div class="btn" style="left:1000px;top:651px;width:135px;height:28px;letter-spacing:.3px">Save report to file...</div>

<svg style="position:absolute;left:0;top:0" width="1366" height="768" viewBox="0 0 1366 768">
<circle cx="1138" cy="86" r="8" fill="#e2e2e2" stroke="#aaa"/><path d="M1135 83l6 6M1141 83l-6 6" stroke="#444" stroke-width="1.200"/>
<circle cx="585" cy="86" r="3" fill="#f0f0f0" stroke="#bbb"/>
<g fill="#a6c98a" stroke="#7a8f68"><circle cx="597.500" cy="141" r="6.500"/><circle cx="597.500" cy="242" r="6.500"/><circle cx="783.500" cy="166" r="6.500"/><circle cx="783.500" cy="242" r="6.500"/><circle cx="783.500" cy="318" r="6.500"/></g>
<g fill="#222"><circle cx="597.500" cy="141" r="2.200"/><circle cx="597.500" cy="242" r="2.200"/><circle cx="783.500" cy="166" r="2.200"/><circle cx="783.500" cy="242" r="2.200"/><circle cx="783.500" cy="318" r="2.200"/></g>
<g fill="#f6f6f6" stroke="#9a9a9a"><circle cx="597.500" cy="166" r="6.500"/><circle cx="597.500" cy="217" r="6.500"/><circle cx="783.500" cy="141" r="6.500"/><circle cx="783.500" cy="217" r="6.500"/><circle cx="783.500" cy="293" r="6.500"/></g>
<g fill="#f4f4f4" stroke="#999"><rect x="589.500" y="353.500" width="12" height="12" rx="2"/><rect x="589.500" y="380.500" width="12" height="12" rx="2"/></g>
<path d="M1129 498l3.500 6h-7zM1129 640l3.500-6h-7z" fill="#888"/>
<ellipse cx="1129.500" cy="621" rx="6" ry="7.500" fill="#c6c6c6" stroke="#999"/>
<use href="#ck" x="643" y="658"/>
<g opacity=".4"><use href="#ck" x="693" y="658"/><use href="#ck" x="786" y="658"/><use href="#ck" x="857" y="658"/><use href="#ck" x="922" y="658"/></g>
<path d="M1061 186v15l3.500-3.500 3 6 2.500-1.200-3-6h5z" fill="#eee" stroke="#333"/>
</svg>
</body></html>
